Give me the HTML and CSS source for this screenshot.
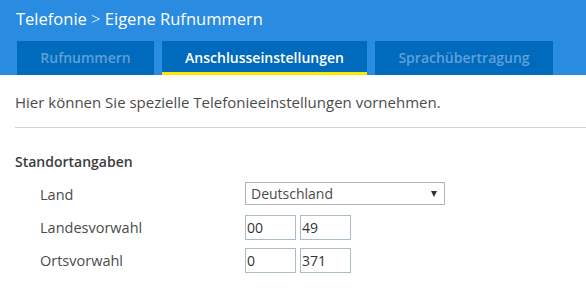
FILE: index.html
```html
<!doctype html>
<html lang="de">
<head>
    <meta charset="UTF-8">
    <title>Eigene Rufnummern</title>
    <link rel="stylesheet" href="styles.css">
</head>
<body>
    <div class="head">
        <h1 class="title">Telefonie <span class="sep">&gt;</span> Eigene Rufnummern</h1>
        <ul class="tabs">
            <li class="tab t1">Rufnummern</li>
            <li class="tab t2 active">Anschlusseinstellungen</li>
            <li class="tab t3">Sprachübertragung</li>
        </ul>
    </div>
    <div class="main">
        <p class="intro">Hier können Sie spezielle Telefonieeinstellungen vornehmen.</p>
        <hr class="line">
        <h2 class="sub">Standortangaben</h2>
        <div class="form">
            <div class="row r1">
                <label>Land</label>
                <span class="sel">
                    <select>
                        <option>Deutschland</option>
                    </select>
                </span>
            </div>
            <div class="row r2">
                <label>Landesvorwahl</label>
                <input type="text" value="00">
                <input type="text" value="49">
            </div>
            <div class="row r3">
                <label>Ortsvorwahl</label>
                <input type="text" value="0">
                <input type="text" value="371">
            </div>
        </div>
    </div>
</body>
</html>
```

FILE: styles.css
```css
*{
    margin: 0;
    padding: 0;
    list-style: none;
    box-sizing: border-box;
}
body{
    font-family: "Open Sans", Lato, sans-serif;
    color: #4b4b4b;
    background: #fff;
}
.head{
    background: #2a8ce0;
    padding: 0 0 0 16px;
}
.title{
    height: 41px;
    line-height: 37px;
    font-size: 16.5px;
    font-weight: 400;
    color: #fff;
}
.sep{
    font-weight: 300;
}
.tabs{
    display: flex;
    gap: 8px;
    padding-left: 1px;
}
.tab{
    height: 34px;
    line-height: 33px;
    background: #006bbd;
    color: #5fa0da;
    font-size: 14px;
    font-weight: 600;
    text-align: center;
}
.t1{ width: 137px; }
.t2{ width: 205px; }
.t3{ width: 178px; }
.tab.active{
    color: #fff;
    border-bottom: 3px solid #ffe800;
    box-shadow: inset 0 -1px 0 #006bbd;
}
.main{
    padding-left: 15px;
}
.intro{
    font-size: 15px;
    line-height: 20px;
    padding-top: 17px;
}
.line{
    border: 0;
    border-top: 1px solid #d3d3d3;
    margin-top: 15px;
}
.sub{
    font-size: 14px;
    font-weight: 600;
    line-height: 20px;
    margin-top: 24px;
    color: #3c3c3c;
}
.form{
    padding-left: 25px;
    margin-top: 4px;
}
.row{
    display: flex;
    align-items: center;
    height: 34px;
    font-size: 14.5px;
}
.r1 label{
    padding-top: 3px;
}
.row label{
    width: 205px;
}
.sel{
    position: relative;
    display: block;
}
.sel select{
    appearance: none;
    -webkit-appearance: none;
    width: 200px;
    height: 23px;
    border: 1px solid #b4b4b4;
    border-radius: 0;
    background: #fff;
    font-family: inherit;
    font-size: 14px;
    color: #4b4b4b;
    padding-left: 5px;
    outline: none;
}
.sel::after{
    content: "";
    position: absolute;
    right: 8px;
    top: 9px;
    border-left: 3px solid transparent;
    border-right: 3px solid transparent;
    border-top: 6px solid #333;
}
.r3{
    height: 33px;
}
.row input{
    width: 51px;
    height: 25px;
    border: 1px solid #a8bcc6;
    font-family: inherit;
    font-size: 14px;
    color: #333;
    padding-left: 1px;
    margin-right: 4px;
    outline: none;
}
```
